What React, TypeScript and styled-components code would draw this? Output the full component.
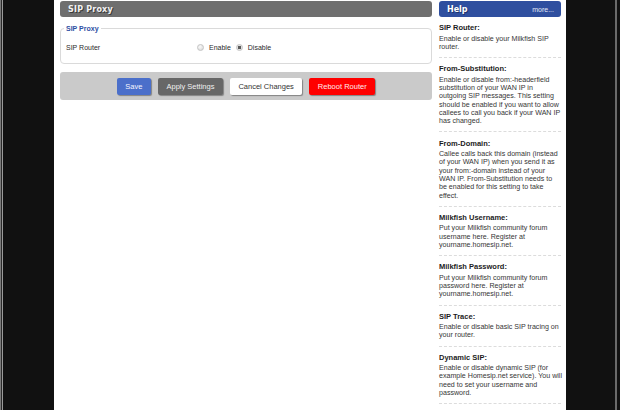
import React from 'react';
import styled, { createGlobalStyle } from 'styled-components';

const Global = createGlobalStyle`
  html, body { margin: 0; padding: 0; background: #111; }
  body {
    width: 620px; height: 410px; overflow: hidden;
    font-family: "Liberation Sans", Arial, sans-serif;
  }
  * { box-sizing: border-box; }
`;

const Frame = styled.div`
  display: flex;
  width: 620px;
  height: 410px;
`;

const LeftGutter = styled.div`
  width: 54px;
  flex: none;
  background: linear-gradient(to right, #7a7a7a 0 1px, #2a2a2a 1px 2px, #9a9a9a 2px 3px, #111 3px);
`;

const RightGutter = styled.div`
  flex: 1;
  background: linear-gradient(to right, #111 0 49px, #6a6a6a 49px 51px, #111 51px);
`;

const Page = styled.div`
  width: 512px;
  flex: none;
  background: #fff;
  display: flex;
  gap: 7px;
  padding: 1px 5px 0 6px;
`;

const MainCol = styled.div`
  width: 372px;
  display: flex;
  flex-direction: column;
`;

const SectionHeader = styled.div`
  height: 16px;
  background: #6f6f6f;
  border-radius: 3px;
  color: #f2f2f2;
  font: bold 8px "DejaVu Sans", Verdana, sans-serif;
  letter-spacing: 0.2px;
  text-shadow: 1px 1px 0 #3a3a3a;
  padding-left: 8px;
  display: flex;
  align-items: center;
`;

const Fieldset = styled.fieldset`
  margin: 7px 0 0;
  border: 1px solid #dadada;
  border-radius: 4px;
  padding: 0 3px 10px;
  min-width: 0;
`;

const Legend = styled.legend`
  padding: 0 2px;
  font-weight: bold;
  font-size: 7px;
  line-height: 9px;
  color: #2e4fa3;
`;

const Row = styled.div`
  display: flex;
  align-items: center;
  height: 12px;
  margin-top: 8px;
  padding-left: 2px;
  font-size: 7px;
  color: #2a2a2a;
`;

const RowLabel = styled.div`
  width: 131px;
  flex: none;
`;

const RadioGroup = styled.div`
  display: flex;
  align-items: center;
`;

const Radio = styled.input.attrs({ type: 'radio' })`
  appearance: none;
  -webkit-appearance: none;
  width: 7px;
  height: 7px;
  margin: 0 5px 0 0;
  border-radius: 50%;
  border: 1px solid #c4c4c4;
  background: radial-gradient(circle at 40% 35%, #fafafa, #d6d6d6);
  &:checked {
    background: radial-gradient(circle, #5a5a5a 0 1.6px, #e2e2e2 2px);
  }
`;

const RadioText = styled.span<{ $gap: number }>`
  margin-right: ${p => p.$gap}px;
`;

const ButtonBar = styled.div`
  margin-top: 8px;
  height: 28px;
  background: #cacaca;
  border-radius: 3px;
  display: flex;
  justify-content: center;
  align-items: flex-start;
  gap: 7px;
  padding-top: 6px;
`;

const variants = {
  blue: { bg: '#4b6fca', fg: '#f4f6ff' },
  gray: { bg: '#676767', fg: '#f0f0f0' },
  white: { bg: '#ffffff', fg: '#333333' },
  red: { bg: '#ff0000', fg: '#ffecec' },
};

const Button = styled.button<{ $v: keyof typeof variants }>`
  height: 17px;
  padding: 0 8.5px;
  border: none;
  border-radius: 2px;
  background: ${p => variants[p.$v].bg};
  color: ${p => variants[p.$v].fg};
  font-family: "Liberation Sans", Arial, sans-serif;
  font-size: 7.5px;
  box-shadow: 1px 1px 1px rgba(0, 0, 0, 0.35);
  cursor: pointer;
`;

const HelpCol = styled.div`
  width: 122px;
  display: flex;
  flex-direction: column;
`;

const HelpHeader = styled.div`
  height: 16px;
  background: #2f4f9f;
  border-radius: 3px;
  display: flex;
  align-items: center;
  justify-content: space-between;
  padding: 0 7px 0 8px;
  color: #fff;
`;

const HelpTitle = styled.span`
  font: bold 8px "DejaVu Sans", Verdana, sans-serif;
  text-shadow: 1px 1px 0 #1e356e;
`;

const More = styled.span`
  font-size: 7px;
  color: #e4e9f7;
`;

const HelpItem = styled.div`
  padding: 6.3px 0 5.8px;
  border-bottom: 1px dashed #dcdcdc;
`;

const ItemTitle = styled.div`
  font-weight: bold;
  font-size: 7.5px;
  line-height: 9px;
  color: #1c1c1c;
  margin-bottom: 2.3px;
`;

const ItemText = styled.div`
  font-size: 7.1px;
  line-height: 8.33px;
  color: #363636;
`;

const ItemLine = styled.span`
  display: block;
  white-space: nowrap;
`;

const helpItems = [
  { t: 'SIP Router:', d: ['Enable or disable your Milkfish SIP', 'router.'] },
  {
    t: 'From-Substitution:',
    d: [
      'Enable or disable from:-headerfield',
      'substitution of your WAN IP in',
      'outgoing SIP messages. This setting',
      'should be enabled if you want to allow',
      'callees to call you back if your WAN IP',
      'has changed.',
    ],
  },
  {
    t: 'From-Domain:',
    d: [
      'Callee calls back this domain (instead',
      'of your WAN IP) when you send it as',
      'your from:-domain instead of your',
      'WAN IP. From-Substitution needs to',
      'be enabled for this setting to take',
      'effect.',
    ],
  },
  {
    t: 'Milkfish Username:',
    d: ['Put your Milkfish community forum', 'username here. Register at', 'yourname.homesip.net.'],
  },
  {
    t: 'Milkfish Password:',
    d: ['Put your Milkfish community forum', 'password here. Register at', 'yourname.homesip.net.'],
  },
  { t: 'SIP Trace:', d: ['Enable or disable basic SIP tracing on', 'your router.'] },
  {
    t: 'Dynamic SIP:',
    d: [
      'Enable or disable dynamic SIP (for',
      'example Homesip.net service). You will',
      'need to set your username and',
      'password.',
    ],
  },
];

export default function App() {
  return (
    <>
      <Global />
      <Frame>
        <LeftGutter />
        <Page>
          <MainCol>
            <SectionHeader>SIP Proxy</SectionHeader>
            <Fieldset>
              <Legend>SIP Proxy</Legend>
              <Row>
                <RowLabel>SIP Router</RowLabel>
                <RadioGroup>
                  <Radio name="sip" />
                  <RadioText $gap={5}>Enable</RadioText>
                  <Radio name="sip" defaultChecked />
                  <RadioText $gap={0}>Disable</RadioText>
                </RadioGroup>
              </Row>
            </Fieldset>
            <ButtonBar>
              <Button $v="blue">Save</Button>
              <Button $v="gray">Apply Settings</Button>
              <Button $v="white">Cancel Changes</Button>
              <Button $v="red">Reboot Router</Button>
            </ButtonBar>
          </MainCol>
          <HelpCol>
            <HelpHeader>
              <HelpTitle>Help</HelpTitle>
              <More>more...</More>
            </HelpHeader>
            {helpItems.map(item => (
              <HelpItem key={item.t}>
                <ItemTitle>{item.t}</ItemTitle>
                <ItemText>
                  {item.d.map(line => (
                    <ItemLine key={line}>{line}</ItemLine>
                  ))}
                </ItemText>
              </HelpItem>
            ))}
          </HelpCol>
        </Page>
        <RightGutter />
      </Frame>
    </>
  );
}
